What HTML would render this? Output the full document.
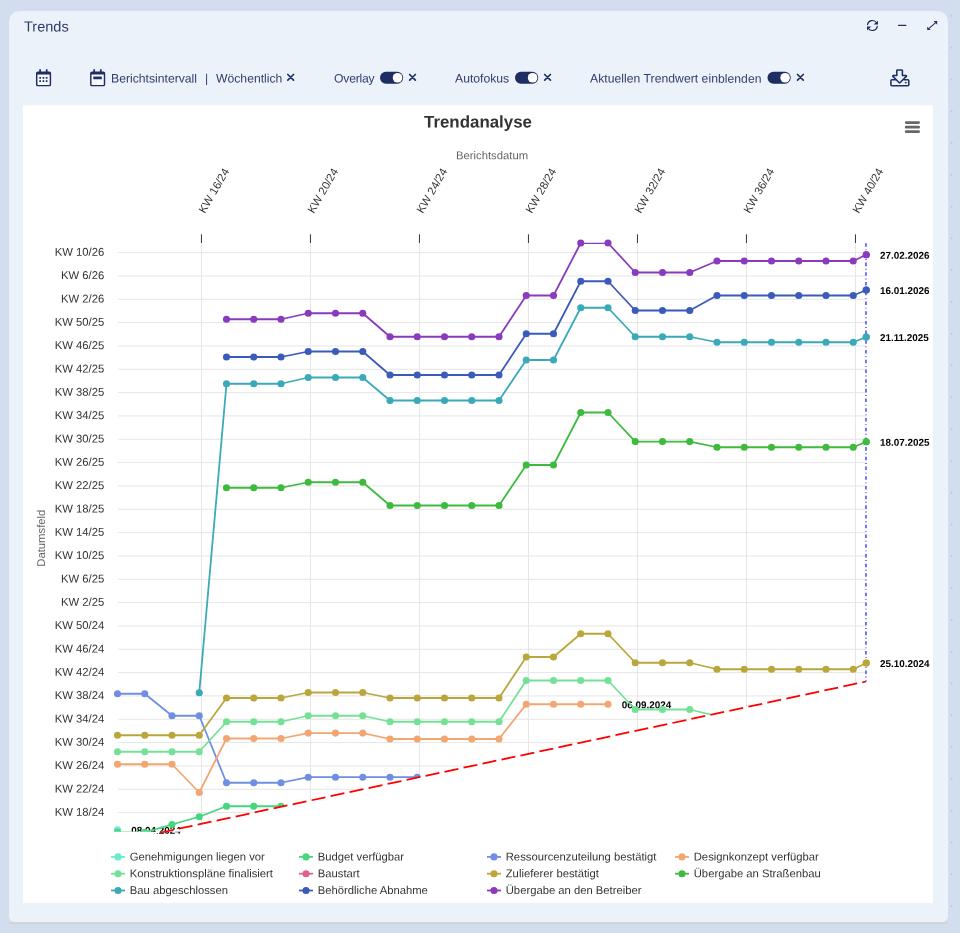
<!DOCTYPE html>
<html lang="de">
<head>
<meta charset="utf-8">
<title>Trends</title>
<style>
html,body{margin:0;padding:0}
body{text-rendering:geometricPrecision;width:960px;height:933px;overflow:hidden;background:#d2deed;font-family:"Liberation Sans",sans-serif;position:relative}
.panel{position:absolute;left:9px;top:11px;width:939px;height:911px;background:#ebf2fa;border-radius:10.5px 10.5px 6px 6px}
.pline{position:absolute;left:9px;top:922px;width:939px;height:2px;background:linear-gradient(#d1d8e0 0,#d1d8e0 50%,#d0d1d1 50%,#d0d1d1 100%)}
.t{position:absolute;transform:translateY(0.6px) rotate(0.04deg);white-space:nowrap;color:#31406d;font-size:12.2px;line-height:14px;height:14px}
.title{position:absolute;left:24px;top:18px;transform:translateY(0.4px) rotate(0.05deg);font-size:14.55px;line-height:18px;color:#2c3b68;white-space:nowrap}
.ico{position:absolute;overflow:visible}
svg.chart{text-rendering:geometricPrecision;position:absolute;left:23px;top:105px;font-family:"Liberation Sans",sans-serif}
.ttl{font-size:16.9px;font-weight:bold;fill:#333}
.axt{font-size:11.3px;fill:#666}
.axl{font-size:11.3px;fill:#333}
.dl{font-size:9.9px;font-weight:bold;fill:#000}
.lg{font-size:11.25px;fill:#333}
</style>
</head>
<body>
<div id="wrap" style="position:absolute;left:0;top:0;width:960px;height:933px;will-change:transform">
<div style="position:absolute;left:949px;top:0;width:5px;height:933px;background-image:radial-gradient(circle,rgba(150,168,198,0.42) 0.5px,rgba(150,168,198,0) 1.4px);background-size:5px 31.8px;background-position:0 -0.2px"></div>
<div class="pline"></div>
<div class="panel"></div>
<div class="title">Trends</div>

<!-- header icons -->
<svg class="ico" style="left:860px;top:12px" width="30" height="28" viewBox="860 12 30 28" fill="none" stroke="#1f2e62" stroke-width="1.15" stroke-linecap="round">
<path d="M867.5 24.6A4.95 4.95 0 0 1 876.5 22.7"/>
<path d="M877.3 26.4A4.95 4.95 0 0 1 868.3 28.3"/>
<path d="M878 20.8V24.6H873.7Z" fill="#1f2e62" stroke="none"/>
<path d="M867 30.4V26.5H871.2Z" fill="#1f2e62" stroke="none"/>
</svg>
<svg class="ico" style="left:890px;top:12px" width="60" height="28" viewBox="890 12 60 28" fill="none" stroke="#1f2e62" stroke-linecap="round">
<path d="M898.6 25.45H905.8" stroke-width="1.3"/>
<path d="M929 28.4L935.4 22.8" stroke-width="1.05"/>
<path d="M933.6 21.1H937.2V24.7Z" fill="#1f2e62" stroke="none"/>
<path d="M927.2 26.7V30.1H930.7Z" fill="#1f2e62" stroke="none"/>
</svg>

<!-- toolbar -->
<svg class="ico" style="left:35px;top:68px" width="17" height="19" viewBox="0 0 17 19" fill="none" stroke="#1f2e62">
<rect x="1.7" y="4.2" width="13.7" height="13.4" rx="1.2" stroke-width="1.45" fill="#f6fafe"/>
<path d="M1.8 5.3H15.3" stroke-width="2.4"/>
<path d="M5.1 1.2V4M11.7 1.2V4" stroke-width="1.7"/>
<path d="M4.3 9.8H6M7.55 9.8H9.25M10.8 9.8H12.5M4.3 13.1H6M7.55 13.1H9.25M10.8 13.1H12.5" stroke-width="1.7"/>
</svg>
<svg class="ico" style="left:89px;top:68px" width="17" height="19" viewBox="0 0 17 19" fill="none" stroke="#1f2e62">
<rect x="1.8" y="4.2" width="13.7" height="13.4" rx="1.2" stroke-width="1.45" fill="#f6fafe"/>
<path d="M1.9 5.3H15.4" stroke-width="2.4"/>
<path d="M5.2 1.2V4M11.8 1.2V4" stroke-width="1.7"/>
<path d="M4.3 9.9H12.8" stroke-width="2.7"/>
</svg>
<div class="t" id="t1" style="left:111px;top:71px">Berichtsintervall</div>
<div class="t" id="t2" style="left:204.6px;top:71px">|</div>
<div class="t" id="t3" style="left:215.5px;top:71px">Wöchentlich</div>

<div class="t" id="t4" style="left:333.5px;top:71px;letter-spacing:-0.22px">Overlay</div>

<div class="t" id="t5" style="left:455px;top:71px">Autofokus</div>

<div class="t" id="t6" style="left:590px;top:71px;letter-spacing:0.025px">Aktuellen Trendwert einblenden</div>

<svg class="ico" style="left:889px;top:68px" width="22" height="20" viewBox="0 0 22 20" fill="none" stroke="#1f2e62" stroke-width="1.55" stroke-linejoin="round" stroke-linecap="round">
<path d="M8.6 1.9H12.6A0.8 0.8 0 0 1 13.4 2.7V7.4H16.9A0.6 0.6 0 0 1 17.3 8.4L11.2 14.5A0.8 0.8 0 0 1 10 14.5L3.9 8.4A0.6 0.6 0 0 1 4.3 7.4H7.8V2.7A0.8 0.8 0 0 1 8.6 1.9Z"/>
<path d="M6.5 11.7H2.9A1 1 0 0 0 1.9 12.7V16.7A1 1 0 0 0 2.9 17.7H18.8A1 1 0 0 0 19.8 16.7V12.7A1 1 0 0 0 18.8 11.7H15.2"/>
<circle cx="16.7" cy="14.7" r="0.55" fill="#1f2e62" stroke-width="0.6"/>
</svg>

<svg class="ico" style="left:0;top:60px" width="960" height="40" viewBox="0 60 960 40">
<rect x="380.00" y="71.85" width="23.20" height="11.8" rx="5.9" fill="#1f2e62"/><circle cx="397.55" cy="77.75" r="4.8" fill="#fff"/>
<rect x="515.00" y="71.85" width="23.25" height="11.8" rx="5.9" fill="#1f2e62"/><circle cx="532.60" cy="77.75" r="4.8" fill="#fff"/>
<rect x="767.50" y="71.85" width="23.25" height="11.8" rx="5.9" fill="#1f2e62"/><circle cx="785.10" cy="77.75" r="4.8" fill="#fff"/>
<path d="M287.80 74.45L293.50 80.15M293.50 74.45L287.80 80.15M409.65 74.45L415.35 80.15M415.35 74.45L409.65 80.15M544.70 74.45L550.40 80.15M550.40 74.45L544.70 80.15M797.55 74.45L803.25 80.15M803.25 74.45L797.55 80.15" stroke="#1f2e62" stroke-width="1.62" stroke-linecap="round" fill="none"/>
</svg>
<svg class="chart" width="910" height="798" viewBox="23 105 910 798">
<defs><clipPath id="pc"><rect x="98" y="202.7" width="788.25" height="630.4"/></clipPath>
<clipPath id="pc2"><rect x="118" y="242.7" width="748.25" height="590.4"/></clipPath></defs>
<rect x="23" y="105.4" width="909.8" height="797.5" fill="#fff"/>
<path d="M118 252.6H866.25M118 275.93H866.25M118 299.27H866.25M118 322.6H866.25M118 345.93H866.25M118 369.27H866.25M118 392.6H866.25M118 415.93H866.25M118 439.27H866.25M118 462.6H866.25M118 485.93H866.25M118 509.27H866.25M118 532.6H866.25M118 555.93H866.25M118 579.27H866.25M118 602.6H866.25M118 625.93H866.25M118 649.27H866.25M118 672.6H866.25M118 695.93H866.25M118 719.27H866.25M118 742.6H866.25M118 765.93H866.25M118 789.27H866.25M118 812.6H866.25M201.45 242.7V831.1M310.45 242.7V831.1M419.45 242.7V831.1M528.45 242.7V831.1M637.45 242.7V831.1M746.45 242.7V831.1M855.45 242.7V831.1" stroke="#e6e6e6" stroke-width="1" fill="none"/>
<path d="M201.45 234.3V243M310.45 234.3V243M419.45 234.3V243M528.45 234.3V243M637.45 234.3V243M746.45 234.3V243M855.45 234.3V243" stroke="#333" stroke-width="1" fill="none"/>
<text transform="translate(478 127.5) rotate(0.03)" text-anchor="middle" class="ttl">Trendanalyse</text>
<text transform="translate(492 159.3) rotate(0.03)" text-anchor="middle" class="axt">Berichtsdatum</text>
<text transform="translate(44.7 538.2) rotate(-90)" text-anchor="middle" class="axt">Datumsfeld</text>
<text transform="translate(104.3 255.8) rotate(0.03)" text-anchor="end" class="axl">KW 10/26</text>
<text transform="translate(104.3 279.13) rotate(0.03)" text-anchor="end" class="axl">KW 6/26</text>
<text transform="translate(104.3 302.47) rotate(0.03)" text-anchor="end" class="axl">KW 2/26</text>
<text transform="translate(104.3 325.8) rotate(0.03)" text-anchor="end" class="axl">KW 50/25</text>
<text transform="translate(104.3 349.13) rotate(0.03)" text-anchor="end" class="axl">KW 46/25</text>
<text transform="translate(104.3 372.47) rotate(0.03)" text-anchor="end" class="axl">KW 42/25</text>
<text transform="translate(104.3 395.8) rotate(0.03)" text-anchor="end" class="axl">KW 38/25</text>
<text transform="translate(104.3 419.13) rotate(0.03)" text-anchor="end" class="axl">KW 34/25</text>
<text transform="translate(104.3 442.47) rotate(0.03)" text-anchor="end" class="axl">KW 30/25</text>
<text transform="translate(104.3 465.8) rotate(0.03)" text-anchor="end" class="axl">KW 26/25</text>
<text transform="translate(104.3 489.13) rotate(0.03)" text-anchor="end" class="axl">KW 22/25</text>
<text transform="translate(104.3 512.47) rotate(0.03)" text-anchor="end" class="axl">KW 18/25</text>
<text transform="translate(104.3 535.8) rotate(0.03)" text-anchor="end" class="axl">KW 14/25</text>
<text transform="translate(104.3 559.13) rotate(0.03)" text-anchor="end" class="axl">KW 10/25</text>
<text transform="translate(104.3 582.47) rotate(0.03)" text-anchor="end" class="axl">KW 6/25</text>
<text transform="translate(104.3 605.8) rotate(0.03)" text-anchor="end" class="axl">KW 2/25</text>
<text transform="translate(104.3 629.13) rotate(0.03)" text-anchor="end" class="axl">KW 50/24</text>
<text transform="translate(104.3 652.47) rotate(0.03)" text-anchor="end" class="axl">KW 46/24</text>
<text transform="translate(104.3 675.8) rotate(0.03)" text-anchor="end" class="axl">KW 42/24</text>
<text transform="translate(104.3 699.13) rotate(0.03)" text-anchor="end" class="axl">KW 38/24</text>
<text transform="translate(104.3 722.47) rotate(0.03)" text-anchor="end" class="axl">KW 34/24</text>
<text transform="translate(104.3 745.8) rotate(0.03)" text-anchor="end" class="axl">KW 30/24</text>
<text transform="translate(104.3 769.13) rotate(0.03)" text-anchor="end" class="axl">KW 26/24</text>
<text transform="translate(104.3 792.47) rotate(0.03)" text-anchor="end" class="axl">KW 22/24</text>
<text transform="translate(104.3 815.8) rotate(0.03)" text-anchor="end" class="axl">KW 18/24</text>
<text transform="translate(204.85 214) rotate(-60)" class="axl">KW 16/24</text>
<text transform="translate(313.85 214) rotate(-60)" class="axl">KW 20/24</text>
<text transform="translate(422.85 214) rotate(-60)" class="axl">KW 24/24</text>
<text transform="translate(531.85 214) rotate(-60)" class="axl">KW 28/24</text>
<text transform="translate(640.85 214) rotate(-60)" class="axl">KW 32/24</text>
<text transform="translate(749.85 214) rotate(-60)" class="axl">KW 36/24</text>
<text transform="translate(858.85 214) rotate(-60)" class="axl">KW 40/24</text>
<text transform="translate(131.2 833.8) rotate(0.03)" class="dl">08.04.2024</text>
<text transform="translate(621.7 708.25) rotate(0.03)" class="dl">06.09.2024</text>
<text transform="translate(879.95 667) rotate(0.03)" class="dl">25.10.2024</text>
<text transform="translate(879.95 445.75) rotate(0.03)" class="dl">18.07.2025</text>
<text transform="translate(879.95 341) rotate(0.03)" class="dl">21.11.2025</text>
<text transform="translate(879.95 294) rotate(0.03)" class="dl">16.01.2026</text>
<text transform="translate(879.95 258.75) rotate(0.03)" class="dl">27.02.2026</text>
<g fill="#69eccf" clip-path="url(#pc)"><circle cx="117.5" cy="829.8" r="3.55"/></g>
<path d="M117.5 832.4L144.75 832.4L172 824.5L199.25 816.75L226.5 806.25L253.75 806.25L281 806.25" stroke="#45d67e" stroke-width="1.78" fill="none" stroke-linejoin="round" stroke-linecap="round" clip-path="url(#pc2)"/>
<g fill="#45d67e" clip-path="url(#pc)"><circle cx="117.5" cy="832.4" r="3.55"/><circle cx="144.75" cy="832.4" r="3.55"/><circle cx="172" cy="824.5" r="3.55"/><circle cx="199.25" cy="816.75" r="3.55"/><circle cx="226.5" cy="806.25" r="3.55"/><circle cx="253.75" cy="806.25" r="3.55"/><circle cx="281" cy="806.25" r="3.55"/></g>
<path d="M117.5 693.75L144.75 693.75L172 715.75L199.25 715.75L226.5 782.75L253.75 782.75L281 782.75L308.25 777.2L335.5 777.2L362.75 777.2L390 777.2L417.25 777.2" stroke="#6f8fe3" stroke-width="1.78" fill="none" stroke-linejoin="round" stroke-linecap="round" clip-path="url(#pc2)"/>
<g fill="#6f8fe3" clip-path="url(#pc)"><circle cx="117.5" cy="693.75" r="3.55"/><circle cx="144.75" cy="693.75" r="3.55"/><circle cx="172" cy="715.75" r="3.55"/><circle cx="199.25" cy="715.75" r="3.55"/><circle cx="226.5" cy="782.75" r="3.55"/><circle cx="253.75" cy="782.75" r="3.55"/><circle cx="281" cy="782.75" r="3.55"/><circle cx="308.25" cy="777.2" r="3.55"/><circle cx="335.5" cy="777.2" r="3.55"/><circle cx="362.75" cy="777.2" r="3.55"/><circle cx="390" cy="777.2" r="3.55"/><circle cx="417.25" cy="777.2" r="3.55"/></g>
<path d="M117.5 764.25L144.75 764.25L172 764.25L199.25 792.5L226.5 738.5L253.75 738.5L281 738.5L308.25 733.1L335.5 733.1L362.75 733.1L390 739L417.25 739L444.5 739L471.75 739L499 739L526.25 704.25L553.5 704.25L580.75 704.25L608 704.25" stroke="#f2a672" stroke-width="1.78" fill="none" stroke-linejoin="round" stroke-linecap="round" clip-path="url(#pc2)"/>
<g fill="#f2a672" clip-path="url(#pc)"><circle cx="117.5" cy="764.25" r="3.55"/><circle cx="144.75" cy="764.25" r="3.55"/><circle cx="172" cy="764.25" r="3.55"/><circle cx="199.25" cy="792.5" r="3.55"/><circle cx="226.5" cy="738.5" r="3.55"/><circle cx="253.75" cy="738.5" r="3.55"/><circle cx="281" cy="738.5" r="3.55"/><circle cx="308.25" cy="733.1" r="3.55"/><circle cx="335.5" cy="733.1" r="3.55"/><circle cx="362.75" cy="733.1" r="3.55"/><circle cx="390" cy="739" r="3.55"/><circle cx="417.25" cy="739" r="3.55"/><circle cx="444.5" cy="739" r="3.55"/><circle cx="471.75" cy="739" r="3.55"/><circle cx="499" cy="739" r="3.55"/><circle cx="526.25" cy="704.25" r="3.55"/><circle cx="553.5" cy="704.25" r="3.55"/><circle cx="580.75" cy="704.25" r="3.55"/><circle cx="608" cy="704.25" r="3.55"/></g>
<path d="M117.5 751.75L144.75 751.75L172 751.75L199.25 751.75L226.5 721.75L253.75 721.75L281 721.75L308.25 715.75L335.5 715.75L362.75 715.75L390 721.75L417.25 721.75L444.5 721.75L471.75 721.75L499 721.75L526.25 680.5L553.5 680.5L580.75 680.5L608 680.5L635.25 709.5L662.5 709.5L689.75 709.5L717 716.2" stroke="#74e296" stroke-width="1.78" fill="none" stroke-linejoin="round" stroke-linecap="round" clip-path="url(#pc2)"/>
<g fill="#74e296" clip-path="url(#pc)"><circle cx="117.5" cy="751.75" r="3.55"/><circle cx="144.75" cy="751.75" r="3.55"/><circle cx="172" cy="751.75" r="3.55"/><circle cx="199.25" cy="751.75" r="3.55"/><circle cx="226.5" cy="721.75" r="3.55"/><circle cx="253.75" cy="721.75" r="3.55"/><circle cx="281" cy="721.75" r="3.55"/><circle cx="308.25" cy="715.75" r="3.55"/><circle cx="335.5" cy="715.75" r="3.55"/><circle cx="362.75" cy="715.75" r="3.55"/><circle cx="390" cy="721.75" r="3.55"/><circle cx="417.25" cy="721.75" r="3.55"/><circle cx="444.5" cy="721.75" r="3.55"/><circle cx="471.75" cy="721.75" r="3.55"/><circle cx="499" cy="721.75" r="3.55"/><circle cx="526.25" cy="680.5" r="3.55"/><circle cx="553.5" cy="680.5" r="3.55"/><circle cx="580.75" cy="680.5" r="3.55"/><circle cx="608" cy="680.5" r="3.55"/><circle cx="635.25" cy="709.5" r="3.55"/><circle cx="662.5" cy="709.5" r="3.55"/><circle cx="689.75" cy="709.5" r="3.55"/><circle cx="717" cy="716.2" r="3.55"/></g>
<path d="M117.5 735.25L144.75 735.25L172 735.25L199.25 735.25L226.5 698L253.75 698L281 698L308.25 692.5L335.5 692.5L362.75 692.5L390 698L417.25 698L444.5 698L471.75 698L499 698L526.25 657L553.5 657L580.75 633.75L608 633.75L635.25 662.75L662.5 662.75L689.75 662.75L717 669.25L744.25 669.25L771.5 669.25L798.75 669.25L826 669.25L853.25 669.25L866.25 663" stroke="#b9a73c" stroke-width="1.78" fill="none" stroke-linejoin="round" stroke-linecap="round" clip-path="url(#pc2)"/>
<g fill="#b9a73c" clip-path="url(#pc)"><circle cx="117.5" cy="735.25" r="3.55"/><circle cx="144.75" cy="735.25" r="3.55"/><circle cx="172" cy="735.25" r="3.55"/><circle cx="199.25" cy="735.25" r="3.55"/><circle cx="226.5" cy="698" r="3.55"/><circle cx="253.75" cy="698" r="3.55"/><circle cx="281" cy="698" r="3.55"/><circle cx="308.25" cy="692.5" r="3.55"/><circle cx="335.5" cy="692.5" r="3.55"/><circle cx="362.75" cy="692.5" r="3.55"/><circle cx="390" cy="698" r="3.55"/><circle cx="417.25" cy="698" r="3.55"/><circle cx="444.5" cy="698" r="3.55"/><circle cx="471.75" cy="698" r="3.55"/><circle cx="499" cy="698" r="3.55"/><circle cx="526.25" cy="657" r="3.55"/><circle cx="553.5" cy="657" r="3.55"/><circle cx="580.75" cy="633.75" r="3.55"/><circle cx="608" cy="633.75" r="3.55"/><circle cx="635.25" cy="662.75" r="3.55"/><circle cx="662.5" cy="662.75" r="3.55"/><circle cx="689.75" cy="662.75" r="3.55"/><circle cx="717" cy="669.25" r="3.55"/><circle cx="744.25" cy="669.25" r="3.55"/><circle cx="771.5" cy="669.25" r="3.55"/><circle cx="798.75" cy="669.25" r="3.55"/><circle cx="826" cy="669.25" r="3.55"/><circle cx="853.25" cy="669.25" r="3.55"/><circle cx="866.25" cy="663" r="3.55"/></g>
<path d="M226.5 487.75L253.75 487.75L281 487.75L308.25 482.25L335.5 482.25L362.75 482.25L390 505.5L417.25 505.5L444.5 505.5L471.75 505.5L499 505.5L526.25 465L553.5 465L580.75 412.5L608 412.5L635.25 441.6L662.5 441.6L689.75 441.6L717 447.25L744.25 447.25L771.5 447.25L798.75 447.25L826 447.25L853.25 447.25L866.25 441.75" stroke="#3eba3e" stroke-width="1.78" fill="none" stroke-linejoin="round" stroke-linecap="round" clip-path="url(#pc2)"/>
<g fill="#3eba3e" clip-path="url(#pc)"><circle cx="226.5" cy="487.75" r="3.55"/><circle cx="253.75" cy="487.75" r="3.55"/><circle cx="281" cy="487.75" r="3.55"/><circle cx="308.25" cy="482.25" r="3.55"/><circle cx="335.5" cy="482.25" r="3.55"/><circle cx="362.75" cy="482.25" r="3.55"/><circle cx="390" cy="505.5" r="3.55"/><circle cx="417.25" cy="505.5" r="3.55"/><circle cx="444.5" cy="505.5" r="3.55"/><circle cx="471.75" cy="505.5" r="3.55"/><circle cx="499" cy="505.5" r="3.55"/><circle cx="526.25" cy="465" r="3.55"/><circle cx="553.5" cy="465" r="3.55"/><circle cx="580.75" cy="412.5" r="3.55"/><circle cx="608" cy="412.5" r="3.55"/><circle cx="635.25" cy="441.6" r="3.55"/><circle cx="662.5" cy="441.6" r="3.55"/><circle cx="689.75" cy="441.6" r="3.55"/><circle cx="717" cy="447.25" r="3.55"/><circle cx="744.25" cy="447.25" r="3.55"/><circle cx="771.5" cy="447.25" r="3.55"/><circle cx="798.75" cy="447.25" r="3.55"/><circle cx="826" cy="447.25" r="3.55"/><circle cx="853.25" cy="447.25" r="3.55"/><circle cx="866.25" cy="441.75" r="3.55"/></g>
<path d="M199.25 692.75L226.5 383.75L253.75 383.75L281 383.75L308.25 377.5L335.5 377.5L362.75 377.5L390 400.5L417.25 400.5L444.5 400.5L471.75 400.5L499 400.5L526.25 360L553.5 360L580.75 307.75L608 307.75L635.25 336.75L662.5 336.75L689.75 336.75L717 342.25L744.25 342.25L771.5 342.25L798.75 342.25L826 342.25L853.25 342.25L866.25 337" stroke="#3aa9b9" stroke-width="1.78" fill="none" stroke-linejoin="round" stroke-linecap="round" clip-path="url(#pc2)"/>
<g fill="#3aa9b9" clip-path="url(#pc)"><circle cx="199.25" cy="692.75" r="3.55"/><circle cx="226.5" cy="383.75" r="3.55"/><circle cx="253.75" cy="383.75" r="3.55"/><circle cx="281" cy="383.75" r="3.55"/><circle cx="308.25" cy="377.5" r="3.55"/><circle cx="335.5" cy="377.5" r="3.55"/><circle cx="362.75" cy="377.5" r="3.55"/><circle cx="390" cy="400.5" r="3.55"/><circle cx="417.25" cy="400.5" r="3.55"/><circle cx="444.5" cy="400.5" r="3.55"/><circle cx="471.75" cy="400.5" r="3.55"/><circle cx="499" cy="400.5" r="3.55"/><circle cx="526.25" cy="360" r="3.55"/><circle cx="553.5" cy="360" r="3.55"/><circle cx="580.75" cy="307.75" r="3.55"/><circle cx="608" cy="307.75" r="3.55"/><circle cx="635.25" cy="336.75" r="3.55"/><circle cx="662.5" cy="336.75" r="3.55"/><circle cx="689.75" cy="336.75" r="3.55"/><circle cx="717" cy="342.25" r="3.55"/><circle cx="744.25" cy="342.25" r="3.55"/><circle cx="771.5" cy="342.25" r="3.55"/><circle cx="798.75" cy="342.25" r="3.55"/><circle cx="826" cy="342.25" r="3.55"/><circle cx="853.25" cy="342.25" r="3.55"/><circle cx="866.25" cy="337" r="3.55"/></g>
<path d="M226.5 357L253.75 357L281 357L308.25 351.5L335.5 351.5L362.75 351.5L390 375L417.25 375L444.5 375L471.75 375L499 375L526.25 333.75L553.5 333.75L580.75 281.25L608 281.25L635.25 310.5L662.5 310.5L689.75 310.5L717 295.5L744.25 295.5L771.5 295.5L798.75 295.5L826 295.5L853.25 295.5L866.25 290" stroke="#3b5bbb" stroke-width="1.78" fill="none" stroke-linejoin="round" stroke-linecap="round" clip-path="url(#pc2)"/>
<g fill="#3b5bbb" clip-path="url(#pc)"><circle cx="226.5" cy="357" r="3.55"/><circle cx="253.75" cy="357" r="3.55"/><circle cx="281" cy="357" r="3.55"/><circle cx="308.25" cy="351.5" r="3.55"/><circle cx="335.5" cy="351.5" r="3.55"/><circle cx="362.75" cy="351.5" r="3.55"/><circle cx="390" cy="375" r="3.55"/><circle cx="417.25" cy="375" r="3.55"/><circle cx="444.5" cy="375" r="3.55"/><circle cx="471.75" cy="375" r="3.55"/><circle cx="499" cy="375" r="3.55"/><circle cx="526.25" cy="333.75" r="3.55"/><circle cx="553.5" cy="333.75" r="3.55"/><circle cx="580.75" cy="281.25" r="3.55"/><circle cx="608" cy="281.25" r="3.55"/><circle cx="635.25" cy="310.5" r="3.55"/><circle cx="662.5" cy="310.5" r="3.55"/><circle cx="689.75" cy="310.5" r="3.55"/><circle cx="717" cy="295.5" r="3.55"/><circle cx="744.25" cy="295.5" r="3.55"/><circle cx="771.5" cy="295.5" r="3.55"/><circle cx="798.75" cy="295.5" r="3.55"/><circle cx="826" cy="295.5" r="3.55"/><circle cx="853.25" cy="295.5" r="3.55"/><circle cx="866.25" cy="290" r="3.55"/></g>
<path d="M226.5 319.25L253.75 319.25L281 319.25L308.25 313.25L335.5 313.25L362.75 313.25L390 336.75L417.25 336.75L444.5 336.75L471.75 336.75L499 336.75L526.25 295.5L553.5 295.5L580.75 243L608 243L635.25 272.5L662.5 272.5L689.75 272.5L717 261L744.25 261L771.5 261L798.75 261L826 261L853.25 261L866.25 254.75" stroke="#8a3bbd" stroke-width="1.78" fill="none" stroke-linejoin="round" stroke-linecap="round" clip-path="url(#pc2)"/>
<g fill="#8a3bbd" clip-path="url(#pc)"><circle cx="226.5" cy="319.25" r="3.55"/><circle cx="253.75" cy="319.25" r="3.55"/><circle cx="281" cy="319.25" r="3.55"/><circle cx="308.25" cy="313.25" r="3.55"/><circle cx="335.5" cy="313.25" r="3.55"/><circle cx="362.75" cy="313.25" r="3.55"/><circle cx="390" cy="336.75" r="3.55"/><circle cx="417.25" cy="336.75" r="3.55"/><circle cx="444.5" cy="336.75" r="3.55"/><circle cx="471.75" cy="336.75" r="3.55"/><circle cx="499" cy="336.75" r="3.55"/><circle cx="526.25" cy="295.5" r="3.55"/><circle cx="553.5" cy="295.5" r="3.55"/><circle cx="580.75" cy="243" r="3.55"/><circle cx="608" cy="243" r="3.55"/><circle cx="635.25" cy="272.5" r="3.55"/><circle cx="662.5" cy="272.5" r="3.55"/><circle cx="689.75" cy="272.5" r="3.55"/><circle cx="717" cy="261" r="3.55"/><circle cx="744.25" cy="261" r="3.55"/><circle cx="771.5" cy="261" r="3.55"/><circle cx="798.75" cy="261" r="3.55"/><circle cx="826" cy="261" r="3.55"/><circle cx="853.25" cy="261" r="3.55"/><circle cx="866.25" cy="254.75" r="3.55"/></g>
<path d="M111.5 831.8L164.24 831.8L111.5 843.09Z" fill="#fff"/>
<path d="M164.24 831.8L867.25 681.29L867.25 831.8Z" fill="#fff"/>
<path d="M117.5 841.81L866.25 681.5" stroke="#ff0000" stroke-width="1.78" stroke-dasharray="14.12 5.3" stroke-dashoffset="15.12" fill="none" clip-path="url(#pc2)"/>
<path d="M865.95 243.2V681.5" stroke="#6464ff" stroke-width="1.78" stroke-dasharray="3.53 2.65 0.88 2.65" fill="none"/>
<circle cx="866.25" cy="663" r="3.55" fill="#b9a73c"/>
<circle cx="866.25" cy="441.75" r="3.55" fill="#3eba3e"/>
<circle cx="866.25" cy="337" r="3.55" fill="#3aa9b9"/>
<circle cx="866.25" cy="290" r="3.55" fill="#3b5bbb"/>
<circle cx="866.25" cy="254.75" r="3.55" fill="#8a3bbd"/>
<path d="M906.2 122.6H918.6M906.2 127.15H918.6M906.2 131.65H918.6" stroke="#666" stroke-width="2.75" stroke-linecap="round"/>
<path d="M111 856.9H125" stroke="#69eccf" stroke-width="1.78"/>
<circle cx="118" cy="856.9" r="3.55" fill="#69eccf"/>
<text transform="translate(129.75 860.45) rotate(0.03)" class="lg">Genehmigungen liegen vor</text>
<path d="M299 856.9H313" stroke="#45d67e" stroke-width="1.78"/>
<circle cx="306" cy="856.9" r="3.55" fill="#45d67e"/>
<text transform="translate(317.75 860.45) rotate(0.03)" class="lg">Budget verfügbar</text>
<path d="M487 856.9H501" stroke="#6f8fe3" stroke-width="1.78"/>
<circle cx="494" cy="856.9" r="3.55" fill="#6f8fe3"/>
<text transform="translate(505.75 860.45) rotate(0.03)" class="lg">Ressourcenzuteilung bestätigt</text>
<path d="M675 856.9H689" stroke="#f2a672" stroke-width="1.78"/>
<circle cx="682" cy="856.9" r="3.55" fill="#f2a672"/>
<text transform="translate(693.75 860.45) rotate(0.03)" class="lg">Designkonzept verfügbar</text>
<path d="M111 873.7H125" stroke="#74e296" stroke-width="1.78"/>
<circle cx="118" cy="873.7" r="3.55" fill="#74e296"/>
<text transform="translate(129.75 877.25) rotate(0.03)" class="lg">Konstruktionspläne finalisiert</text>
<path d="M299 873.7H313" stroke="#dc6385" stroke-width="1.78"/>
<circle cx="306" cy="873.7" r="3.55" fill="#dc6385"/>
<text transform="translate(317.75 877.25) rotate(0.03)" class="lg">Baustart</text>
<path d="M487 873.7H501" stroke="#b9a73c" stroke-width="1.78"/>
<circle cx="494" cy="873.7" r="3.55" fill="#b9a73c"/>
<text transform="translate(505.75 877.25) rotate(0.03)" class="lg">Zulieferer bestätigt</text>
<path d="M675 873.7H689" stroke="#3eba3e" stroke-width="1.78"/>
<circle cx="682" cy="873.7" r="3.55" fill="#3eba3e"/>
<text transform="translate(693.75 877.25) rotate(0.03)" class="lg">Übergabe an Straßenbau</text>
<path d="M111 890.5H125" stroke="#3aa9b9" stroke-width="1.78"/>
<circle cx="118" cy="890.5" r="3.55" fill="#3aa9b9"/>
<text transform="translate(129.75 894.05) rotate(0.03)" class="lg">Bau abgeschlossen</text>
<path d="M299 890.5H313" stroke="#3b5bbb" stroke-width="1.78"/>
<circle cx="306" cy="890.5" r="3.55" fill="#3b5bbb"/>
<text transform="translate(317.75 894.05) rotate(0.03)" class="lg">Behördliche Abnahme</text>
<path d="M487 890.5H501" stroke="#8a3bbd" stroke-width="1.78"/>
<circle cx="494" cy="890.5" r="3.55" fill="#8a3bbd"/>
<text transform="translate(505.75 894.05) rotate(0.03)" class="lg">Übergabe an den Betreiber</text>
</svg>
</div>
</body>
</html>
